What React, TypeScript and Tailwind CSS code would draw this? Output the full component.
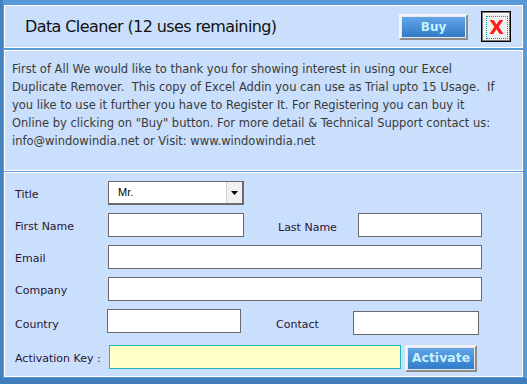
import React from "react";

const font = { fontFamily: '"DejaVu Sans", Verdana, sans-serif' };

function TextBox({ w, h = 24, className = "" }: { w: number; h?: number; className?: string }) {
  return (
    <div
      className={`bg-white border border-[#6a6a6a] ${className}`}
      style={{ width: w, height: h }}
    />
  );
}

function BlueButton({ label, w, h, size = "text-[12px]" }: { label: string; w: number; h: number; size?: string }) {
  return (
    <div
      className="border-2 border-t-[#f4f4f4] border-l-[#f4f4f4] border-r-[#8c8c8c] border-b-[#8c8c8c] bg-[#e8e8e8] p-[1px]"
      style={{ width: w, height: h }}
    >
      <div className={`w-full h-full bg-gradient-to-b from-[#63a5e6] to-[#2f7bc9] flex items-center justify-center font-bold text-[#c6f1ff] ${size}`}>
        {label}
      </div>
    </div>
  );
}

export default function App() {
  return (
    <div
      className="w-[527px] h-[384px] bg-[#5a9ad6] overflow-hidden relative"
      style={font}
    >
      <div className="absolute left-0 top-0 w-[3px] h-full bg-[#4582c0]" />
      <div className="absolute left-0 bottom-0 w-full h-[6px] bg-[#3f7dbd]" />
      <div className="pl-[4px] pt-[5px] flex flex-col relative">
        {/* Header */}
        <div className="w-[519px] h-[43px] border border-white bg-[#c9dffb] flex items-center">
          <div className="ml-[20px] text-[16px] text-[#111] tracking-[-0.6px]">
            Data Cleaner (12 uses remaining)
          </div>
          <div className="ml-auto mr-[11px] flex items-center gap-[13px]">
            <BlueButton label="Buy" w={69} h={26} />
            <div className="w-[30px] h-[31px] border border-black bg-[#7a7a7a] p-[1px]">
              <div className="w-full h-full bg-[#f0f0f0] border-t border-l border-white flex items-center justify-center">
                <div className="w-[22px] h-[23px] border border-dotted border-[#009aa0] flex items-center justify-center text-[19px] font-bold text-[#ff1a1a] leading-none">
                  X
                </div>
              </div>
            </div>
          </div>
        </div>
        {/* Info text */}
        <div className="mt-[2px] w-[519px] h-[121px] border border-white bg-[#c9dffb] pl-[7px] pt-[9px] pr-[6px]">
          <p className="text-[11.5px] leading-[18px] text-[#3a3a3a]">
            First of All We would like to thank you for showing interest in using our Excel
            <br />
            Duplicate Remover.&nbsp; This copy of Excel Addin you can use as Trial upto 15 Usage.&nbsp; If
            <br />
            you like to use it further you have to Register It. For Registering you can buy it
            <br />
            Online by clicking on "Buy" button. For more detail &amp; Technical Support contact us:
            <br />
            info@windowindia.net or Visit: www.windowindia.net
          </p>
        </div>
        {/* Form */}
        <div className="mt-[1px] w-[519px] h-[205px] border border-white bg-[#c9dffb] text-[11px] text-[#2a1535]">
          <div className="flex items-center mt-[8px] h-[24px]">
            <div className="ml-[10px] w-[93px] pt-[4px]">Title</div>
            <div className="w-[136px] h-[24px] border border-[#6a6a6a] border-r-2 border-b-2 bg-white flex items-center">
              <span className="ml-[9px] text-[11px] text-black" style={{ fontFamily: '"Liberation Sans", Arial, sans-serif' }}>Mr.</span>
              <div className="ml-auto w-[16px] h-full bg-[#f0f0f0] border-l border-[#d0d0d0] flex items-center justify-center">
                <svg width="7" height="4" viewBox="0 0 7 4"><path d="M0 0h7L3.5 4z" fill="#000" /></svg>
              </div>
            </div>
          </div>
          <div className="flex items-center mt-[8px] h-[24px]">
            <div className="ml-[10px] w-[93px] pt-[4px]">First Name</div>
            <TextBox w={136} />
            <div className="ml-[34px] w-[80px] pt-[6px]">Last Name</div>
            <TextBox w={124} />
          </div>
          <div className="flex items-center mt-[8px] h-[24px]">
            <div className="ml-[10px] w-[93px] pt-[5px]">Email</div>
            <TextBox w={374} />
          </div>
          <div className="flex items-center mt-[8px] h-[24px]">
            <div className="ml-[10px] w-[93px] pt-[5px]">Company</div>
            <TextBox w={374} />
          </div>
          <div className="flex items-start mt-[8px] h-[26px]">
            <div className="ml-[10px] w-[92px] self-center pt-[6px]">Country</div>
            <TextBox w={134} />
            <div className="ml-[35px] w-[77px] self-center pt-[6px]">Contact</div>
            <TextBox w={126} className="mt-[2px]" />
          </div>
          <div className="flex items-center mt-[10px] h-[27px]">
            <div className="ml-[10px] w-[94px] pt-[1px]">Activation Key :</div>
            <div className="w-[292px] h-[24px] bg-[#ffffc6] border border-[#1fb6c4] self-start" />
            <div className="ml-[4px]">
              <BlueButton label="Activate" w={72} h={27} size="text-[12.5px]" />
            </div>
          </div>
        </div>
      </div>
    </div>
  );
}
